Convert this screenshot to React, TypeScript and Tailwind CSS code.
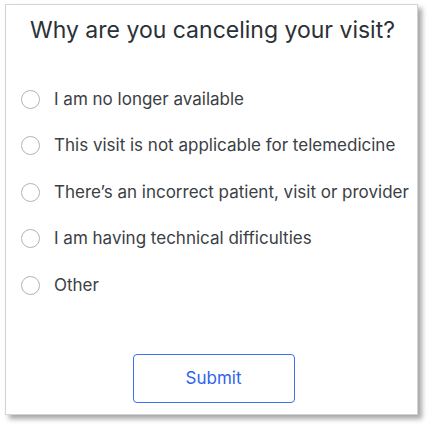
import React from 'react';

const reasons = [
  'I am no longer available',
  'This visit is not applicable for telemedicine',
  'There\u2019s an incorrect patient, visit or provider',
  'I am having technical difficulties',
  'Other',
];

export default function App() {
  return (
    <div className="w-[432px] h-[428px] bg-white pt-[4px] pl-[5px]" style={{ fontFamily: 'Inter, "Noto Sans", sans-serif' }}>
      <div className="w-[413px] h-[411px] border border-[#d4d4d4] bg-white shadow-[4px_4px_5px_rgba(0,0,0,0.35)] flex flex-col">
        <h1 className="text-center text-[23px] leading-none text-[#2b3136] mt-[14px] pl-[2px]">
          Why are you canceling your visit?
        </h1>
        <div className="flex flex-col mt-[34px] pl-[15px]">
          {reasons.map((r) => (
            <label key={r} className="flex items-center h-[46.5px] gap-[14px]">
              <span className="w-[19px] h-[19px] rounded-full border border-[#b3b3b3] shrink-0" />
              <span className="text-[17px] text-[#3b4045] leading-none">{r}</span>
            </label>
          ))}
        </div>
        <div className="flex justify-center mt-auto mb-[11px] pl-[4px]">
          <button className="w-[162px] h-[49px] border border-[#3d6ff0] rounded-[4px] text-[17px] text-[#2f64ee]">
            Submit
          </button>
        </div>
      </div>
    </div>
  );
}
